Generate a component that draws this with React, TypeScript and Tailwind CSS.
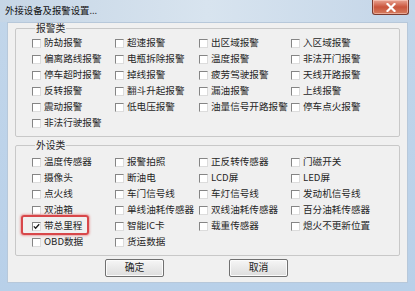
import React from 'react';

type Item = { label: string; checked?: boolean; mark?: boolean };

const alarms: string[][] = [
    ['防劫报警', '超速报警', '出区域报警', '入区域报警'],
    ['偏离路线报警', '电瓶拆除报警', '温度报警', '非法开门报警'],
    ['停车超时报警', '掉线报警', '疲劳驾驶报警', '天线开路报警'],
    ['反转报警', '翻斗升起报警', '漏油报警', '上线报警'],
    ['震动报警', '低电压报警', '油量信号开路报警', '停车点火报警'],
    ['非法行驶报警'],
];

const devices: Item[][] = [
    [{ label: '温度传感器' }, { label: '报警拍照' }, { label: '正反转传感器' }, { label: '门磁开关' }],
    [{ label: '摄像头' }, { label: '断油电' }, { label: 'LCD屏' }, { label: 'LED屏' }],
    [{ label: '点火线' }, { label: '车门信号线' }, { label: '车灯信号线' }, { label: '发动机信号线' }],
    [{ label: '双油箱' }, { label: '单线油耗传感器' }, { label: '双线油耗传感器' }, { label: '百分油耗传感器' }],
    [{ label: '带总里程', checked: true, mark: true }, { label: '智能IC卡' }, { label: '载重传感器' }, { label: '熄火不更新位置' }],
    [{ label: 'OBD数据' }, { label: '货运数据' }],
];

const CheckBox: React.FC<Item> = ({ label, checked, mark }) => (
    <div className="relative flex h-[16px] items-center gap-[3px] whitespace-nowrap">
        {mark && (
            <div className="absolute left-[-11px] top-[-3px] h-[20px] w-[68px] rounded-[3px] border-2 border-[#d8474a] shadow-[0_0_2px_1px_rgba(230,120,120,0.6)]" />
        )}
        <span className="flex h-[9px] w-[9px] shrink-0 items-center justify-center border border-t-[#858585] border-l-[#858585] border-r-[#dcdcdc] border-b-[#dcdcdc] bg-white">
            {checked && (
                <svg width="7" height="7" viewBox="0 0 7 7">
                    <polyline points="0.8,3.4 2.6,5.3 6.2,1.2" fill="none" stroke="#1b1b1b" strokeWidth="1.3" />
                </svg>
            )}
        </span>
        <span className="text-[9.6px] leading-none text-[#262626]">{label}</span>
    </div>
);

const Group: React.FC<{ title: string; rows: Item[][]; className?: string }> = ({ title, rows, className }) => (
    <fieldset className={`mx-[7px] rounded-[2px] border border-[#c8c8c8] pl-[16px] ${className ?? ''}`}>
        <legend className="ml-[3px] px-[1px] text-[9.8px] leading-[11px] text-[#262626]">{title}</legend>
        <div className="grid grid-cols-[83px_84px_92px_90px]">
            {rows.map((r, i) => r.map((it, j) => <CheckBox key={`${i}-${j}`} {...it} />))}
        </div>
    </fieldset>
);

const WinButton: React.FC<{ children: React.ReactNode }> = ({ children }) => (
    <button className="flex h-[18px] w-[59px] items-center justify-center rounded-[2px] border border-[#707070] bg-gradient-to-b from-[#f6f6f6] to-[#dddddd] text-[9.8px] leading-none text-[#1e1e1e] shadow-[inset_0_0_0_1px_#fbfbfb]">
        {children}
    </button>
);

export default function App() {
    const font = { fontFamily: '"Noto Sans CJK SC", "Liberation Sans", sans-serif' };
    return (
        <div className="flex h-[291px] w-[415px] flex-col overflow-hidden bg-gradient-to-b from-[#c2d6ea] to-[#b8d0e9]" style={font}>
            {/* title bar */}
            <div className="flex h-[22px] items-start justify-between bg-gradient-to-r from-[#c6d6e6] via-[#d8e4ef] to-[#c3d5e8]">
                <div className="pl-[5px] pt-[4px] text-[9.4px] leading-[12px] text-[#111]">外接设备及报警设置...</div>
                <div className="mr-[6px] flex h-[15px] w-[37px] items-center justify-center rounded-b-[3px] border border-t-0 border-[#7a3b30] bg-gradient-to-b from-[#e8a493] via-[#c9543c] to-[#d47c5e] shadow-[inset_0_0_0_1px_rgba(255,220,210,0.5)]">
                    <svg width="10" height="9" viewBox="0 0 10 9">
                        <path d="M1.5 1 L8.5 8 M8.5 1 L1.5 8" stroke="#fff" strokeWidth="2.2" strokeLinecap="square" />
                    </svg>
                </div>
            </div>
            {/* client */}
            <div className="mx-[7px] mb-[8px] flex flex-1 flex-col border border-[#b7c8da] bg-[#f0f0f0]">
                <Group title="报警类" rows={alarms.map(r => r.map(l => ({ label: l })))} className="pb-[5px] pt-[1px]" />
                <Group title="外设类" rows={devices} className="mt-[3px] pb-[5px] pt-[3px]" />
                <div className="flex flex-1 items-center gap-[65px] pb-[3px] pl-[97px]">
                    <WinButton>确定</WinButton>
                    <WinButton>取消</WinButton>
                </div>
            </div>
        </div>
    );
}
